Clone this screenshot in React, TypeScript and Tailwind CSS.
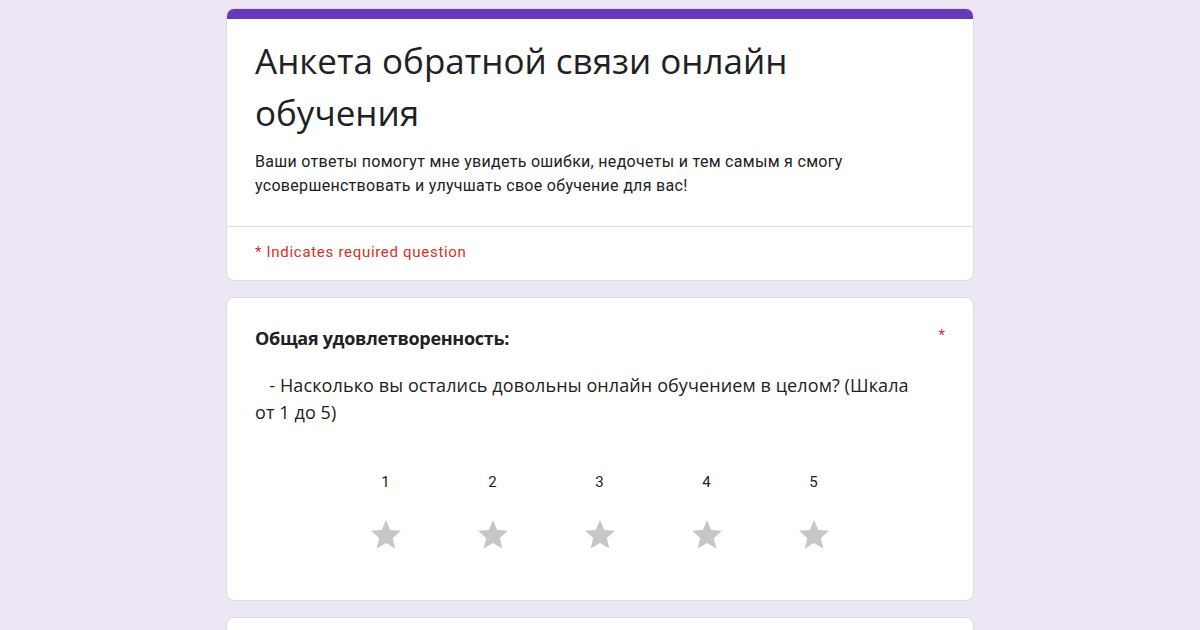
const starPath = 'M12 17.27L18.18 21l-1.64-7.03L22 9.24l-7.19-.61L12 2 9.19 8.63 2 9.24l5.46 4.73L5.82 21z';

function StarIcon() {
  return (
    <svg viewBox="0 0 24 24" className="mt-[25px] w-[36px] h-[36px]">
      <path d={starPath} fill="#c6c6c6" />
    </svg>
  );
}

export default function App() {
  const scale = [1, 2, 3, 4, 5];
  const sans = { fontFamily: '"Open Sans", Roboto, sans-serif' };

  return (
    <div className="h-[630px] overflow-hidden bg-[#ede7f6] pt-2" style={{ fontFamily: 'Roboto, "Noto Sans", sans-serif' }}>
      <div className="w-[748px] mx-auto flex flex-col gap-4">
        <div className="bg-white rounded-lg border border-[#dadce0] overflow-hidden">
          <div className="h-[10px] bg-[#673ab7]" />
          <div className="px-[28px] pt-[16px] pb-[28px]">
            <h1 className="max-w-[560px] text-[35px] leading-[52px] text-[#202124]" style={sans}>
              Анкета обратной связи онлайн обучения
            </h1>
            <p className="max-w-[600px] mt-[11px] text-[16px] leading-[24px] text-[#202124] tracking-[0.3px]">
              Ваши ответы помогут мне увидеть ошибки, недочеты и тем самым я смогу усовершенствовать и улучшать свое обучение для вас!
            </p>
          </div>
          <div className="border-t border-[#dadce0] px-[28px] pt-[13px] pb-[16px]">
            <p className="text-[15px] leading-[24px] text-[#d93025] tracking-[0.7px]">* Indicates required question</p>
          </div>
        </div>

        <div className="bg-white rounded-lg border border-[#dadce0] px-[28px] pt-[27px] pb-[47px]">
          <div className="flex justify-between">
            <h2 className="text-[18px] leading-[26px] font-bold text-[#202124] tracking-[-0.3px]" style={sans}>Общая удовлетворенность:</h2>
            <span className="text-[#d93025] text-[15px] leading-[20px]">*</span>
          </div>
          <p className="max-w-[665px] mt-[21px] text-[18px] leading-[27px] text-[#202124] tracking-[0.1px] whitespace-pre-wrap" style={sans}>
            {'   - Насколько вы остались довольны онлайн обучением в целом? (Шкала от 1 до 5)'}
          </p>
          <div className="mt-[46px] flex justify-center gap-[77px] pr-[1px]">
            {scale.map((n) => (
              <div key={n} className="w-[30px] flex flex-col items-center">
                <span className="text-[15px] leading-[20px] text-[#202124]">{n}</span>
                <StarIcon />
              </div>
            ))}
          </div>
        </div>

        <div className="bg-white rounded-lg border border-[#dadce0] h-[60px]" />
      </div>
    </div>
  );
}
